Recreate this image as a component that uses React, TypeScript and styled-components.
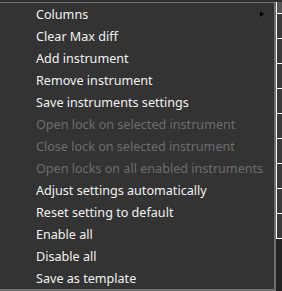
import React from "react";
import styled, { createGlobalStyle } from "styled-components";

const Global = createGlobalStyle`
  html, body { margin: 0; padding: 0; background: #2b2b2b; overflow: hidden; }
  body { width: 282px; height: 291px; font-family: "Noto Sans", "Liberation Sans", sans-serif; }
`;

const Screen = styled.div`
  width: 282px;
  height: 291px;
  display: flex;
  flex-direction: column;
  background: #2b2b2b;
`;

const TopStrip = styled.div`
  height: 2px;
  background: #2f2f2f;
  flex: none;
`;

const Body = styled.div`
  display: flex;
  flex: 1;
`;

const Menu = styled.ul`
  list-style: none;
  margin: 0;
  padding: 0;
  width: 274px;
  height: 286px;
  background: #333333;
  border-top: 1px solid #6f6f6f;
  border-right: 2px solid #6f6f6f;
  border-bottom: 2px solid #6f6f6f;
  display: flex;
  flex-direction: column;
`;

const Item = styled.li<{ $disabled?: boolean }>`
  height: 22px;
  display: flex;
  align-items: center;
  padding-left: 36px;
  position: relative;
  font-size: 12.6px;
  color: ${(p) => (p.$disabled ? "#6d6d6d" : "#f2f2f2")};
  white-space: nowrap;
`;

const Arrow = styled.span`
  position: absolute;
  left: 260px;
  top: 8px;
  width: 0;
  height: 0;
  border-top: 3.5px solid transparent;
  border-bottom: 3.5px solid transparent;
  border-left: 4px solid #000;
`;

const Side = styled.div`
  flex: 1;
  display: flex;
  flex-direction: column;
`;

const SideHead = styled.div`
  height: 11px;
  background: #555555;
  border-left: 1px solid #ffffff;
`;

const Cell = styled.div`
  height: 24px;
  background: #3a3a3a;
  border-top: 1px solid #ffffff;
  border-left: 1px solid #ffffff;
`;

const SideRest = styled.div`
  flex: 1;
  background: #222222;
  border-top: 1px solid #ffffff;
`;

type Entry = { label: string; disabled?: boolean; sub?: boolean };

const items: Entry[] = [
  { label: "Columns", sub: true },
  { label: "Clear Max diff" },
  { label: "Add instrument" },
  { label: "Remove instrument" },
  { label: "Save instruments settings" },
  { label: "Open lock on selected instrument", disabled: true },
  { label: "Close lock on selected instrument", disabled: true },
  { label: "Open locks on all enabled instruments", disabled: true },
  { label: "Adjust settings automatically" },
  { label: "Reset setting to default" },
  { label: "Enable all" },
  { label: "Disable all" },
  { label: "Save as template" },
];

export default function App() {
  return (
    <Screen>
      <Global />
      <TopStrip />
      <Body>
        <Menu>
          {items.map((it) => (
            <Item key={it.label} $disabled={it.disabled}>
              {it.label}
              {it.sub && <Arrow />}
            </Item>
          ))}
        </Menu>
        <Side>
          <SideHead />
          {Array.from({ length: 9 }).map((_, i) => (
            <Cell key={i} />
          ))}
          <SideRest />
        </Side>
      </Body>
    </Screen>
  );
}
